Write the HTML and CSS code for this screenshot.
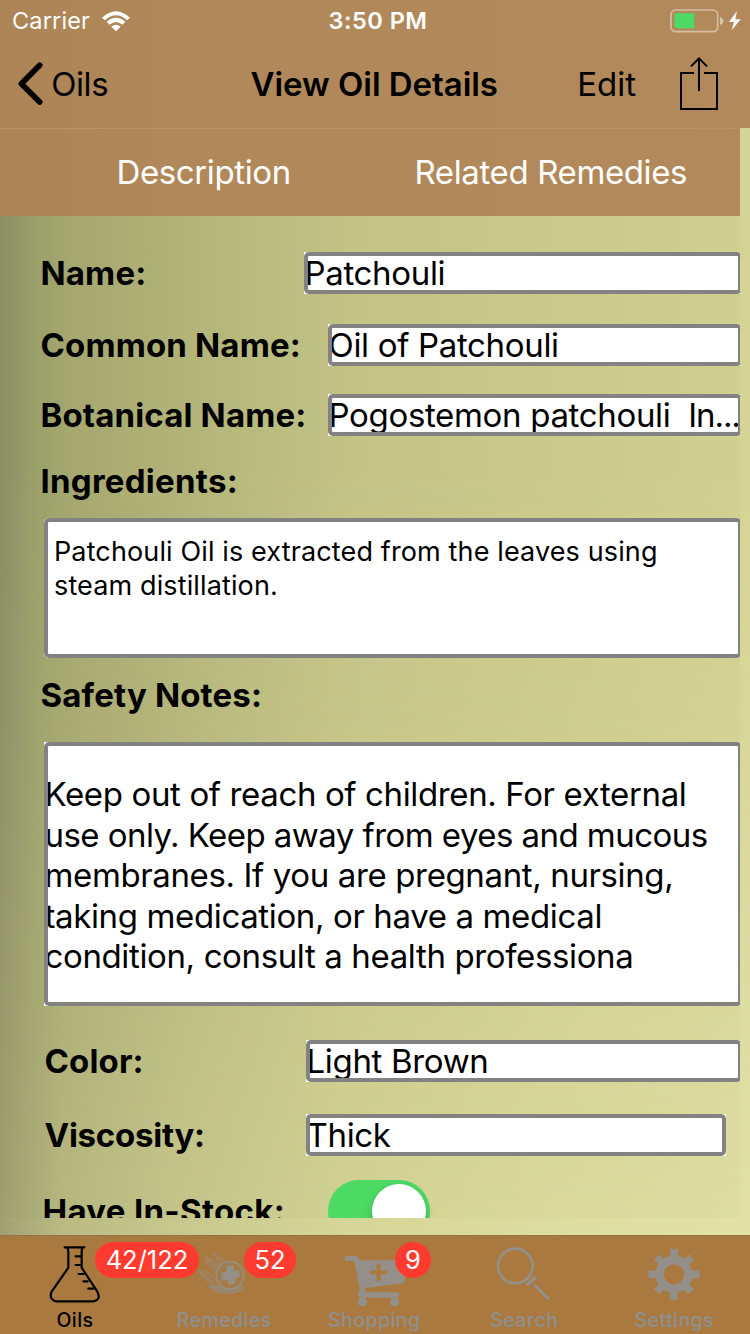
FILE: index.html
```html
<!DOCTYPE html>
<html lang="en">
<head>
<meta charset="utf-8">
<title>View Oil Details</title>
<link rel="stylesheet" href="styles.css">
</head>
<body>
<div class="screen">
  <header class="header">
    <div class="status">
      <div class="status-side"><span class="carrier">Carrier</span>
        <svg class="wifi" viewBox="300 26 90 66" fill="#fff"><path d="M303 49Q345 10 387 49L378 57Q345 27 312 57Z"/><path d="M317 62Q345 37 373 62L364 70Q345 54 326 70Z"/><path d="M331 76Q345 64 359 76L345 90Z"/></svg>
      </div>
      <span class="time">3:50 PM</span>
      <div class="status-side status-right">
        <svg class="battery" viewBox="884 26 214 72"><rect x="887" y="29" width="140" height="65" rx="14" fill="none" stroke="#fff" stroke-opacity=".45" stroke-width="5"/><path d="M1034 50Q1044 54 1044 62T1034 74Z" fill="#fff" fill-opacity=".5"/><path d="M907 39H957V84H907Q897 84 897 74V49Q897 39 907 39Z" fill="#4cd964"/><path d="M1085 32L1061 65H1076L1069 90L1096 57H1080Z" fill="#fff"/></svg>
      </div>
    </div>
    <nav class="nav">
      <div class="back"><svg class="chevron" viewBox="50 184 80 136"><path d="M118 197L63 252L118 307" fill="none" stroke="#000" stroke-width="17" stroke-linecap="round" stroke-linejoin="round"/></svg><span class="nav-text oils">Oils</span></div>
      <h1 class="title">View Oil Details</h1>
      <div class="actions"><span class="nav-text edit">Edit</span>
        <svg class="share" viewBox="912 168 120 165" fill="none" stroke="#000" stroke-width="6"><path d="M957 219H918V327H1026V219H987M972 273V176M948 199L972 175L996 199"/></svg>
      </div>
    </nav>
  </header>

  <main class="content">
    <div class="segments"><span class="segment description">Description</span><span class="segment related">Related Remedies</span></div>
    <form class="form">
      <div class="row name"><label class="label l-name">Name:</label><div class="field">Patchouli</div></div>
      <div class="row common"><label class="label l-common">Common Name:</label><div class="field">Oil of Patchouli</div></div>
      <div class="row botanical"><label class="label l-botanical">Botanical Name:</label><div class="field">Pogostemon patchouli&nbsp; <span class="ellipsis">In...</span></div></div>
      <label class="label heading ingredients-label">Ingredients:</label>
      <div class="field area ingredients">Patchouli Oil is extracted from the leaves using<br>steam distillation.</div>
      <label class="label heading safety-label">Safety Notes:</label>
      <div class="field area safety">Keep out of reach of children. For external<br><span class="tight">use only. Keep away from eyes and mucous</span><br>membranes. If you are pregnant, nursing,<br>taking medication, or have a medical<br>condition, consult a health professiona</div>
      <div class="row color"><label class="label l-color">Color:</label><div class="field">Light Brown</div></div>
      <div class="row viscosity"><label class="label l-viscosity">Viscosity:</label><div class="field">Thick</div></div>
      <div class="row stock"><label class="label l-stock">Have In-Stock:</label><div class="switch"><div class="knob"></div></div></div>
    </form>
  </main>

  <footer class="tabs">
    <div class="tab active">
      <svg class="icon" viewBox="114 38 225 188" fill="none" stroke="#000" stroke-width="6.5" stroke-linecap="round" stroke-linejoin="round"><path d="M194 51H253M201 52Q205 57 205 64V112L155 184Q147 202 162 211Q166 213 172 213H278Q292 212 296 202Q297 193 292 184L245 112V64Q245 57 248 52M245 78H227M245 104H227M251 131H236M263 153H250M279 175H265"/></svg>
      <span class="tab-label t-oils">Oils</span><span class="badge b-oils">42/122</span>
    </div>
    <div class="tab">
      <svg class="icon" viewBox="563 38 225 188" fill="none" stroke="#949089" stroke-width="5"><path d="M641 163Q608 148 599 120Q633 121 650 150M652 125Q619 109 618 78Q648 89 663 111M676 94Q664 76 642 71Q655 82 661 102" stroke-width="3" stroke-opacity=".65" fill="#949089" fill-opacity=".22"/><path d="M604 125L636 154M624 84L652 118" stroke-width="2"/><circle cx="692" cy="135" r="41" fill="#949089" fill-opacity=".1"/><path d="M624 167Q645 158 660 166Q690 184 732 164Q740 186 694 191Q648 194 624 167Z" fill="#949089" fill-opacity=".6" stroke="none"/><path fill="#949089" stroke="none" d="M680 108L701 104L705 120L721 122L720 141L708 144L709 159L690 163L684 149L668 150L665 128L681 124Z"/></svg>
      <span class="tab-label t-remedies">Remedies</span><span class="badge b-remedies">52</span>
    </div>
    <div class="tab">
      <svg class="icon" viewBox="263 38 225 188" fill="#949089"><path fill-rule="evenodd" d="M291 77H322Q327 78 329 90H466V158L347 173L349 186H444Q450 188 450 194T444 202H337Q327 201 326 193Q327 182 332 178L315 92H291Q285 91 285 85T291 77ZM382 104V120H366Q361 121 361 126T366 132H382V148Q384 153 388 153T394 148V132H409Q414 131 414 126T409 120H394V104Q393 99 388 99T382 104Z"/><circle cx="340" cy="215" r="14"/><circle cx="436" cy="215" r="14"/></svg>
      <span class="tab-label t-shopping">Shopping</span><span class="badge b-shopping">9</span>
    </div>
    <div class="tab">
      <svg class="icon" viewBox="-39 38 225 188" fill="none" stroke="#949089"><circle cx="46" cy="107" r="52" stroke-width="8"/><path d="M80 165L107 141" stroke-width="12"/><path d="M103 163L147 207" stroke-width="9"/></svg>
      <span class="tab-label t-search">Search</span>
    </div>
    <div class="tab">
      <svg class="icon" viewBox="411 38 225 188" fill="none" stroke="#949089"><circle cx="522" cy="132" r="43" stroke-width="25"/><path d="M522 88V55M522 176V209M478 132H445M566 132H599" stroke-width="23"/><path d="M486 96L470 80M558 96L574 80M486 168L470 184M558 168L574 184" stroke-width="22"/></svg>
      <span class="tab-label t-settings">Settings</span>
    </div>
  </footer>
</div>
</body>
</html>
```
FILE: styles.css
```css
* { box-sizing: border-box; }
body { margin: 0; font-family: Inter, Roboto, sans-serif; color: #000; }
.screen { position: relative; width: 750px; height: 1334px; display: flex; flex-direction: column; overflow: hidden; isolation: isolate; background: linear-gradient(90deg, #a0a274 0, #bbbc84 60px, #c8c98f 170px, #d6d798 340px, #dedfa1 560px, #e3e3a8 750px); }
.screen::before { content: ""; position: absolute; inset: 0; z-index: -1; background: linear-gradient(90deg, #8e9066 0, #9ca26c 35px, #a9ab72 80px, #b8b97e 210px, #c5c688 350px, #cdce8e 560px, #d3d495 750px); -webkit-mask-image: linear-gradient(#000 35%, rgba(0,0,0,.75) 58%, transparent 95%); mask-image: linear-gradient(#000 35%, rgba(0,0,0,.75) 58%, transparent 95%); }
.header { height: 128px; background: linear-gradient(90deg, #ac8455, #b0885a 180px, #b1895a); flex: none; }
.status { height: 40px; display: grid; grid-template-columns: 1fr auto 1fr; align-items: center; padding: 1px 10px 0 12px; color: #fff; }
.status-side { display: flex; align-items: center; gap: 11px; height: 30px; }
.status-right { justify-content: flex-end; margin-right: -1px; }
.carrier { font-size: 23.5px; letter-spacing: .15px; }
.time { font-size: 23.5px; font-weight: 600; letter-spacing: .5px; padding-left: 4px; }
.wifi { width: 30px; height: 22px; }
.battery { width: 71.3px; height: 24px; }
.nav { height: 88px; display: grid; grid-template-columns: 1fr auto 1fr; align-items: center; padding: 0 31px 0 16.5px; }
.back, .actions { display: flex; align-items: center; }
.back { gap: 8px; }
.chevron { width: 26.7px; height: 45.3px; }
.nav-text { font-size: 33px; line-height: 44px; }
.oils { letter-spacing: -.4px; }
.title { margin: 0; padding-left: 13px; font-size: 33px; font-weight: 600; line-height: 44px; letter-spacing: -.05px; }
.actions { justify-content: flex-end; gap: 43px; }
.share { width: 40px; height: 55px; margin-top: -1px; }
.content { width: 740px; height: 1090px; flex: none; overflow: hidden; background: rgba(120,110,50,.035); }
.segments { height: 88px; display: flex; align-items: center; padding-bottom: 2px; border-top: 1px solid #bd9169; background: linear-gradient(90deg, #ac8455, #b0885a 180px, #b1895a); color: #fff; }
.segment { font-size: 33px; white-space: nowrap; flex: none; letter-spacing: -.38px; }
.description { margin-left: 116.5px; width: 298px; }
.form { width: 741.5px; padding-top: 36px; display: flex; flex-direction: column; }
.row { display: flex; height: 42px; flex: none; padding-left: 40.5px; }
.label { font-size: 33px; line-height: 42px; font-weight: 700; white-space: nowrap; flex: none; letter-spacing: .15px; }
.field { position: relative; flex: 1; min-width: 0; overflow: hidden; background: #fff; white-space: nowrap; font-size: 33px; line-height: 42px; letter-spacing: -.33px; padding-left: .5px; }
.field::after { content: ""; position: absolute; inset: 0; border: 4px solid #828282; border-radius: 5px; }
.row .label { width: 287.5px; }
.row .l-name { width: 263.5px; }
.common { margin-top: 30px; }
.botanical { margin-top: 28px; }
.ellipsis { letter-spacing: -1.1px; }
.heading { margin-left: 40.5px; }
.ingredients-label { margin-top: 24px; letter-spacing: .27px; }
.area { margin-left: 44px; flex: none; }
.ingredients { margin-top: 16px; height: 140px; padding: 17px 0 0 10px; font-size: 27px; line-height: 34px; letter-spacing: .13px; border-radius: 5px; }
.safety-label { margin-top: 16px; }
.safety { margin-top: 26px; height: 264px; padding-top: 32px; line-height: 40.5px; letter-spacing: -.37px; }
.tight { letter-spacing: -.55px; }
.color { margin-top: 34px; padding-left: 44.5px; }
.viscosity { margin-top: 32px; padding-left: 44.5px; padding-right: 15.5px; }
.color .label, .viscosity .label { width: 261.5px; }
.row .l-viscosity { letter-spacing: -.25px; }
.stock { margin-top: 24px; height: 62px; padding-left: 42.5px; }
.stock .label { width: 285.5px; line-height: 62px; letter-spacing: .3px; }
.switch { width: 102px; height: 62px; border-radius: 31px; background: #4cd964; padding: 4px; display: flex; justify-content: flex-end; }
.knob { width: 54px; height: 54px; border-radius: 50%; background: #fff; box-shadow: 0 5px 10px rgba(0,0,0,.2); }
.tabs { height: 99px; margin-top: 17px; flex: none; display: grid; grid-template-columns: repeat(5, 1fr); background: #a97940; border-top: 1px solid #927443; }
.tab { position: relative; display: flex; flex-direction: column; align-items: center; color: #8f8f8f; padding: 7px 1.5px 0 0; }
.active { color: #000; padding-right: 0; }
.icon { width: 75px; height: 62.7px; flex: none; }
.tab-label { font-size: 19.5px; line-height: 24px; font-weight: 500; margin-top: 2px; letter-spacing: .45px; white-space: nowrap; }
.badge { position: absolute; top: 6px; height: 36px; border-radius: 18px; background: #ff3b30; color: #fff; font-size: 25.5px; line-height: 36px; text-align: center; }
.b-oils { left: 95px; width: 104px; z-index: 1; }
.b-remedies { left: 94px; width: 52px; }
.b-shopping { left: 95px; width: 36px; }
```
